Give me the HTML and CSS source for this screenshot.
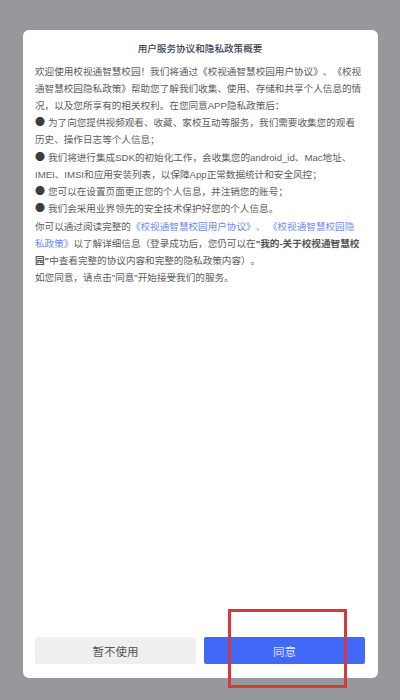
FILE: index.html
```html
<!DOCTYPE html>
<html lang="zh-CN">
<head>
<meta charset="utf-8">
<title>用户服务协议和隐私政策概要</title>
<link rel="stylesheet" href="styles.css">
</head>
<body>
<main class="dialog">
  <h1 class="title">用户服务协议和隐私政策概要</h1>
  <div class="content">
    <p class="para">欢迎使用校视通智慧校园！我们将通过《校视通智慧校园用户协议》、《校视通智慧校园隐私政策》帮助您了解我们收集、使用、存储和共享个人信息的情况，以及您所享有的相关权利。在您同意APP隐私政策后：</p>
    <p class="para"><span class="bullet">●</span>为了向您提供视频观看、收藏、家校互动等服务，我们需要收集您的观看历史、操作日志等个人信息；</p>
    <p class="para"><span class="bullet">●</span>我们将进行集成SDK的初始化工作，会收集您的android_id、Mac地址、IMEI、IMSI和应用安装列表，以保障App正常数据统计和安全风控；</p>
    <p class="para"><span class="bullet">●</span>您可以在设置页面更正您的个人信息，并注销您的账号；</p>
    <p class="para"><span class="bullet">●</span>我们会采用业界领先的安全技术保护好您的个人信息。</p>
    <p class="para">你可以通过阅读完整的<span class="link">《校视通智慧校园用户协议》、 《校视通智慧校园隐私政策》</span>以了解详细信息（登录成功后，您仍可以在<b class="strong">"我的-关于校视通智慧校园"</b>中查看完整的协议内容和完整的隐私政策内容）。</p>
    <p class="para">如您同意，请点击"同意"开始接受我们的服务。</p>
  </div>
  <div class="actions">
    <button class="btn btn-secondary">暂不使用</button>
    <button class="btn btn-primary">同意</button>
  </div>
</main>
<div class="marker"></div>
</body>
</html>
```
FILE: styles.css
```css
html, body { margin: 0; padding: 0; }
body {
  width: 400px;
  height: 700px;
  overflow: hidden;
  position: relative;
  background: #97989c;
  padding: 30px 22px 22px 23px;
  box-sizing: border-box;
  font-family: "Liberation Sans", "Noto Sans CJK SC", sans-serif;
}
.dialog {
  height: 648px;
  background: #fff;
  border-radius: 6px;
  display: flex;
  flex-direction: column;
  box-sizing: border-box;
  padding: 0 13px 14px 12px;
}
.title {
  margin: 0;
  padding-top: 12px;
  font-size: 9.6px;
  line-height: 13px;
  font-weight: 500;
  color: #3a3f52;
  text-align: center;
}
.content {
  flex: 1;
  padding: 7.5px 2px 0 0;
  font-size: 9.6px;
  line-height: 17.1px;
  color: #5c5c5e;
  text-spacing-trim: space-all;
  text-autospace: no-autospace;
}
.para { margin: 0 0 0.3px; }
.bullet {
  display: inline-block;
  width: 13px;
  color: #3c3c40;
  font-family: "Noto Sans CJK SC", sans-serif;
  font-size: 10px;
  line-height: 1;
}
.link { color: #6f8df0; }
.strong { font-weight: 600; color: #555; }
.actions {
  display: flex;
  gap: 8px;
}
.btn {
  flex: 1;
  height: 27px;
  border: 0;
  border-radius: 2px;
  font-family: inherit;
  font-size: 11.5px;
  padding: 0;
}
.btn-secondary { background: #efefef; color: #555; }
.btn-primary { background: #4168f6; color: #dfe6ff; }
.marker {
  position: absolute;
  left: 228px;
  top: 609px;
  width: 119px;
  height: 79px;
  box-sizing: border-box;
  border: 3.5px solid #d5393f;
}
```
